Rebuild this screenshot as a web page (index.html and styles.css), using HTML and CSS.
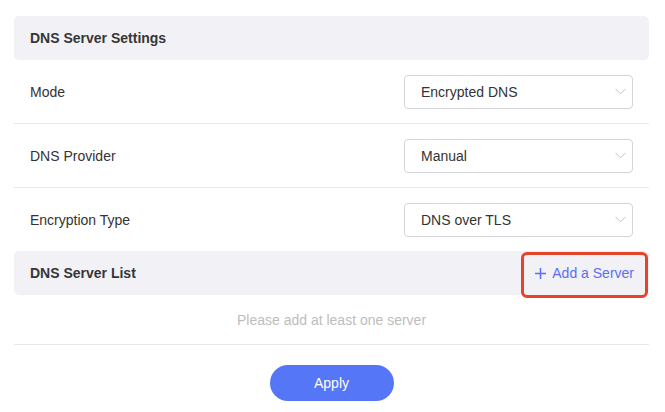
FILE: index.html
```html
<!DOCTYPE html>
<html>
<head>
<meta charset="utf-8">
<link rel="stylesheet" href="styles.css">
</head>
<body>
<div class="page">
  <div class="section-head"><span class="section-title">DNS Server Settings</span></div>
  <div class="row">
    <span class="label">Mode</span>
    <div class="select"><span>Encrypted DNS</span><svg class="chev" width="11" height="7" viewBox="0 0 11 7"><path d="M0.5 0.8 L5.5 5.8 L10.5 0.8" fill="none" stroke="#c4c4c8" stroke-width="1"/></svg></div>
  </div>
  <div class="row">
    <span class="label">DNS Provider</span>
    <div class="select"><span>Manual</span><svg class="chev" width="11" height="7" viewBox="0 0 11 7"><path d="M0.5 0.8 L5.5 5.8 L10.5 0.8" fill="none" stroke="#c4c4c8" stroke-width="1"/></svg></div>
  </div>
  <div class="row last">
    <span class="label">Encryption Type</span>
    <div class="select"><span>DNS over TLS</span><svg class="chev" width="11" height="7" viewBox="0 0 11 7"><path d="M0.5 0.8 L5.5 5.8 L10.5 0.8" fill="none" stroke="#c4c4c8" stroke-width="1"/></svg></div>
  </div>
  <div class="section-head list-head">
    <span class="section-title">DNS Server List</span>
    <a class="add-btn"><svg width="11" height="11" viewBox="0 0 11 11"><path d="M5.5 0 V11 M0 5.5 H11" stroke="#5b6ef5" stroke-width="1.5"/></svg><span>Add a Server</span></a>
  </div>
  <div class="empty">Please add at least one server</div>
  <div class="actions"><button class="apply">Apply</button></div>
</div>
</body>
</html>
```
FILE: styles.css
```css
html, body {
  margin: 0;
  padding: 0;
  background: #ffffff;
  font-family: "Liberation Sans", Arial, sans-serif;
}
.page {
  width: 635px;
  margin-left: 14px;
  padding-top: 16px;
}
.section-head {
  height: 44px;
  background: #f2f2f6;
  border-radius: 5px;
  display: flex;
  align-items: center;
  justify-content: space-between;
  padding: 0 15px 0 16px;
}
.section-title {
  font-weight: bold;
  font-size: 14px;
  color: #363636;
}
.row {
  height: 63px;
  display: flex;
  align-items: center;
  justify-content: space-between;
  padding: 0 16px;
  border-bottom: 1px solid #e8e8ea;
}
.row.last {
  border-bottom: none;
}
.label {
  font-size: 14px;
  color: #333;
}
.select {
  box-sizing: border-box;
  width: 229px;
  height: 34px;
  border: 1px solid #d6d6da;
  border-radius: 4px;
  display: flex;
  align-items: center;
  justify-content: space-between;
  padding: 0 6px 0 16px;
  font-size: 14px;
  color: #333;
}
.chev {
  display: block;
}
.add-btn {
  position: relative;
  display: flex;
  align-items: center;
  gap: 6px;
  font-size: 14px;
  color: #5b6ef5;
}
.add-btn svg {
  display: block;
}
.add-btn::after {
  content: "";
  position: absolute;
  left: -14px;
  right: -14px;
  top: -13px;
  bottom: -17px;
  border: 3px solid #e8412c;
  border-radius: 6px;
}
.empty {
  height: 49px;
  display: flex;
  align-items: center;
  justify-content: center;
  font-size: 14px;
  color: #bdbdbd;
  border-bottom: 1px solid #e8e8ea;
}
.actions {
  display: flex;
  justify-content: center;
  padding-top: 20px;
}
.apply {
  width: 124px;
  height: 36px;
  border: none;
  border-radius: 18px;
  background: #5576f7;
  color: #fff;
  font-family: "Liberation Sans", Arial, sans-serif;
  font-size: 14px;
}
```
